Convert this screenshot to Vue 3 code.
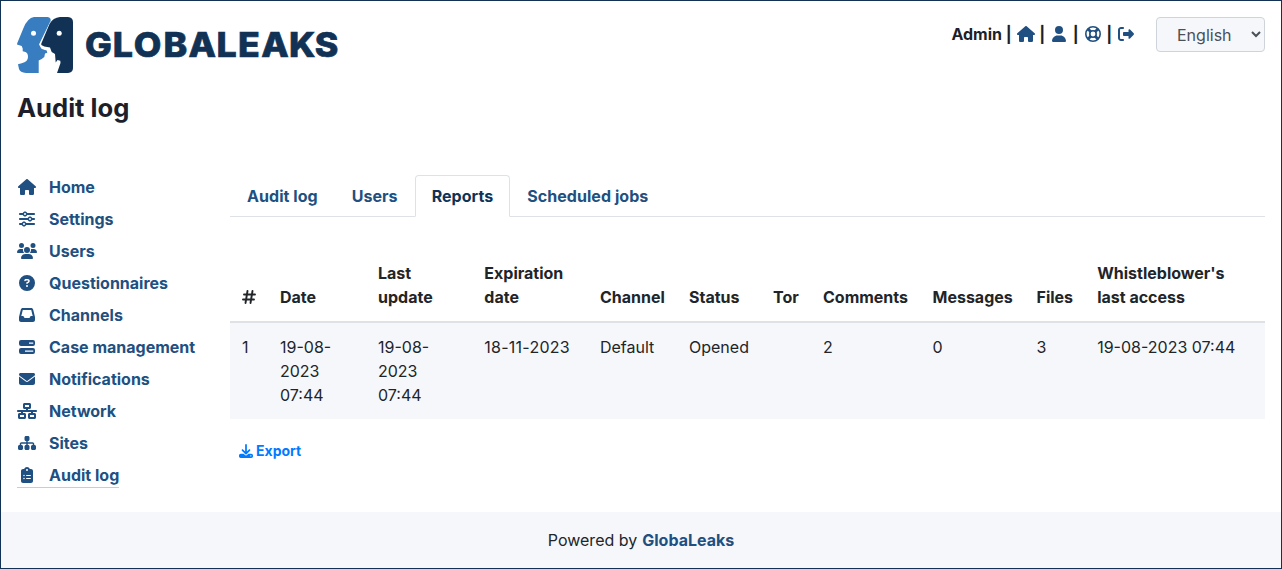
<script setup>
import { ref } from 'vue'

const language = ref('English')

const icons = {
  home: { w: 576, d: 'M575.8 255.5c0 18-15 32.1-32 32.1l-32 0 .7 160.2c0 2.7-.2 5.4-.5 8.1l0 16.2c0 22.1-17.9 40-40 40l-16 0c-1.1 0-2.2 0-3.3-.1c-1.4 .1-2.8 .1-4.2 .1L416 512l-24 0c-22.1 0-40-17.9-40-40l0-24 0-64c0-17.7-14.3-32-32-32l-64 0c-17.7 0-32 14.3-32 32l0 64 0 24c0 22.1-17.9 40-40 40l-24 0-31.9 0c-1.5 0-3-.1-4.5-.2c-1.2 .1-2.4 .2-3.6 .2l-16 0c-22.1 0-40-17.9-40-40l0-112c0-.9 0-1.9 .1-2.8l0-69.6-32 0c-18 0-32-14-32-32.1c0-9 3-17 10-24L266.4 8c7-7 15-8 22-8s15 2 21 7L564.8 231.5c8 7 12 15 11 24z' },
  sliders: { w: 512, d: 'M0 416c0 17.7 14.3 32 32 32l54.7 0c12.3 28.3 40.5 48 73.3 48s61-19.7 73.3-48L480 448c17.7 0 32-14.3 32-32s-14.3-32-32-32l-246.7 0c-12.3-28.3-40.5-48-73.3-48s-61 19.7-73.3 48L32 384c-17.7 0-32 14.3-32 32zm128 0a32 32 0 1 1 64 0 32 32 0 1 1 -64 0zM320 256a32 32 0 1 1 64 0 32 32 0 1 1 -64 0zm32-80c-32.8 0-61 19.7-73.3 48L32 224c-17.7 0-32 14.3-32 32s14.3 32 32 32l246.7 0c12.3 28.3 40.5 48 73.3 48s61-19.7 73.3-48l54.7 0c17.7 0 32-14.3 32-32s-14.3-32-32-32l-54.7 0c-12.3-28.3-40.5-48-73.3-48zM192 128a32 32 0 1 1 0-64 32 32 0 1 1 0 64zm73.3-64C253 35.7 224.8 16 192 16s-61 19.7-73.3 48L32 64C14.3 64 0 78.3 0 96s14.3 32 32 32l86.7 0c12.3 28.3 40.5 48 73.3 48s61-19.7 73.3-48L480 128c17.7 0 32-14.3 32-32s-14.3-32-32-32L265.3 64z' },
  users: { w: 640, d: 'M144 0a80 80 0 1 1 0 160A80 80 0 1 1 144 0zM512 0a80 80 0 1 1 0 160A80 80 0 1 1 512 0zM0 298.7C0 239.8 47.8 192 106.7 192l42.7 0c15.9 0 31 3.5 44.6 9.7c-1.3 7.2-1.9 14.7-1.9 22.3c0 38.2 16.8 72.5 43.3 96c-.2 0-.4 0-.7 0L21.3 320C9.6 320 0 310.4 0 298.7zM405.3 320c-.2 0-.4 0-.7 0c26.6-23.5 43.3-57.8 43.3-96c0-7.600-.7-15-1.900-22.300c13.600-6.300 28.700-9.700 44.600-9.700l42.700 0C592.200 192 640 239.800 640 298.700c0 11.800-9.600 21.300-21.300 21.300l-213.300 0zM224 224a96 96 0 1 1 192 0 96 96 0 1 1 -192 0zM128 485.300C128 411.700 187.700 352 261.300 352l117.300 0C452.300 352 512 411.700 512 485.300c0 14.700-11.900 26.700-26.700 26.700l-330.700 0c-14.700 0-26.700-11.900-26.700-26.700z' },
  question: { w: 512, d: 'M256 512A256 256 0 1 0 256 0a256 256 0 1 0 0 512zM169.800 165.300c7.900-22.300 29.100-37.300 52.800-37.300l58.300 0c34.900 0 63.100 28.300 63.100 63.100c0 22.600-12.100 43.500-31.700 54.800L280 264.400c-.2 13-10.900 23.600-24 23.600c-13.300 0-24-10.700-24-24l0-13.500c0-8.600 4.600-16.500 12.100-20.800l44.300-25.400c4.700-2.700 7.600-7.700 7.600-13.100c0-8.400-6.800-15.100-15.100-15.100l-58.300 0c-3.400 0-6.400 2.100-7.500 5.300l-.4 1.200c-4.400 12.500-18.200 19-30.600 14.600s-19-18.200-14.600-30.600l.4-1.200zM224 352a32 32 0 1 1 64 0 32 32 0 1 1 -64 0z' },
  inbox: { w: 512, d: 'M121 32C91.600 32 66 52 58.900 80.500L1.900 308.400C.6 313.500 0 318.700 0 323.900L0 416c0 35.300 28.700 64 64 64l384 0c35.300 0 64-28.700 64-64l0-92.100c0-5.200-.6-10.400-1.900-15.500l-57-227.900C446 52 420.400 32 391 32L121 32zm0 64l270 0 48 192-51.200 0c-12.100 0-23.200 6.800-28.600 17.700l-14.300 28.600c-5.400 10.800-16.500 17.700-28.600 17.700l-120.400 0c-12.100 0-23.200-6.800-28.600-17.700l-14.300-28.600c-5.400-10.800-16.500-17.700-28.600-17.700L73 288 121 96z' },
  bars: { w: 512, d: 'M64 32h384a64 64 0 0 1 64 64v64a64 64 0 0 1-64 64H64a64 64 0 0 1-64-64V96a64 64 0 0 1 64-64zM320 108v40h136v-40zM64 288h384a64 64 0 0 1 64 64v64a64 64 0 0 1-64 64H64a64 64 0 0 1-64-64v-64a64 64 0 0 1 64-64zM192 364v40h264v-40z' },
  envelope: { w: 512, d: 'M48 64C21.500 64 0 85.500 0 112c0 15.100 7.100 29.300 19.200 38.400L236.800 313.600c11.400 8.500 27 8.500 38.400 0L492.800 150.400c12.100-9.100 19.200-23.300 19.200-38.400c0-26.500-21.500-48-48-48L48 64zM0 176L0 384c0 35.300 28.700 64 64 64l384 0c35.300 0 64-28.700 64-64l0-208L294.400 339.200c-22.800 17.100-54 17.100-76.800 0L0 176z' },
  network: { w: 640, d: 'M256 64l128 0 0 64-128 0 0-64zM240 0c-26.500 0-48 21.500-48 48l0 96c0 26.500 21.500 48 48 48l48 0 0 32L32 224c-17.700 0-32 14.300-32 32s14.300 32 32 32l96 0 0 32-48 0c-26.500 0-48 21.500-48 48l0 96c0 26.500 21.500 48 48 48l160 0c26.500 0 48-21.500 48-48l0-96c0-26.500-21.500-48-48-48l-48 0 0-32 256 0 0 32-48 0c-26.500 0-48 21.500-48 48l0 96c0 26.500 21.500 48 48 48l160 0c26.500 0 48-21.500 48-48l0-96c0-26.500-21.500-48-48-48l-48 0 0-32 96 0c17.700 0 32-14.300 32-32s-14.300-32-32-32l-256 0 0-32 48 0c26.500 0 48-21.500 48-48l0-96c0-26.500-21.500-48-48-48L240 0zM96 448l0-64 128 0 0 64L96 448zm320-64l128 0 0 64-128 0 0-64z' },
  sitemap: { w: 576, d: 'M208 80c0-26.500 21.500-48 48-48l64 0c26.500 0 48 21.500 48 48l0 64c0 26.500-21.500 48-48 48l-8 0 0 40 152 0c30.900 0 56 25.100 56 56l0 32 8 0c26.500 0 48 21.500 48 48l0 64c0 26.500-21.500 48-48 48l-64 0c-26.500 0-48-21.500-48-48l0-64c0-26.500 21.500-48 48-48l8 0 0-32c0-4.400-3.600-8-8-8l-152 0 0 40 8 0c26.500 0 48 21.500 48 48l0 64c0 26.500-21.500 48-48 48l-64 0c-26.500 0-48-21.500-48-48l0-64c0-26.500 21.500-48 48-48l8 0 0-40-152 0c-4.400 0-8 3.600-8 8l0 32 8 0c26.500 0 48 21.500 48 48l0 64c0 26.500-21.500 48-48 48l-64 0c-26.500 0-48-21.500-48-48l0-64c0-26.500 21.500-48 48-48l8 0 0-32c0-30.900 25.100-56 56-56l152 0 0-40-8 0c-26.500 0-48-21.500-48-48l0-64z' },
  clipboard: { w: 384, d: 'M192 0c-41.800 0-77.400 26.700-90.500 64L64 64C28.700 64 0 92.700 0 128L0 448c0 35.300 28.700 64 64 64l256 0c35.300 0 64-28.700 64-64l0-320c0-35.300-28.700-64-64-64l-37.500 0C269.400 26.700 233.800 0 192 0zm0 64a32 32 0 1 1 0 64 32 32 0 1 1 0-64zM72 272a24 24 0 1 1 48 0 24 24 0 1 1 -48 0zm104-16l128 0c8.800 0 16 7.200 16 16s-7.200 16-16 16l-128 0c-8.800 0-16-7.200-16-16s7.200-16 16-16zM72 368a24 24 0 1 1 48 0 24 24 0 1 1 -48 0zm88 0c0-8.800 7.200-16 16-16l128 0c8.800 0 16 7.200 16 16s-7.200 16-16 16l-128 0c-8.800 0-16-7.200-16-16z' },
  user: { w: 448, d: 'M224 256A128 128 0 1 0 224 0a128 128 0 1 0 0 256zm-45.700 48C79.800 304 0 383.800 0 482.300C0 498.700 13.300 512 29.700 512l388.600 0c16.400 0 29.700-13.300 29.700-29.700C448 383.800 368.200 304 269.700 304l-91.400 0z' },
  exit: { w: 512, d: 'M160 32c17.700 0 32 14.300 32 32s-14.300 32-32 32H96c-17.700 0-32 14.300-32 32v256c0 17.700 14.300 32 32 32h64c17.700 0 32 14.300 32 32s-14.300 32-32 32H96c-53 0-96-43-96-96V128C0 75 43 32 96 32zM502.600 233.400L377 107c-15-15-41-4-41 17v68H192c-17.700 0-32 14.300-32 32v64c0 17.700 14.300 32 32 32h144v68c0 21 26 32 41 17l125.600-126.400c12.500-12.500 12.500-32.700 0-45.200z' },
  download: { w: 512, d: 'M288 32c0-17.700-14.300-32-32-32s-32 14.300-32 32l0 242.700-73.400-73.400c-12.500-12.500-32.800-12.500-45.300 0s-12.500 32.800 0 45.300l128 128c12.500 12.500 32.800 12.500 45.300 0l128-128c12.500-12.500 12.500-32.800 0-45.300s-32.800-12.500-45.300 0L288 274.700 288 32zM64 352c-35.300 0-64 28.700-64 64l0 32c0 35.300 28.700 64 64 64l384 0c35.300 0 64-28.700 64-64l0-32c0-35.300-28.700-64-64-64l-101.500 0-45.300 45.300c-25 25-65.500 25-90.500 0L165.500 352 64 352zm368 56a24 24 0 1 1 0 48 24 24 0 1 1 0-48z' }
}

const menu = [
  ['home', 'Home'], ['sliders', 'Settings'], ['users', 'Users'],
  ['question', 'Questionnaires'], ['inbox', 'Channels'], ['bars', 'Case management'],
  ['envelope', 'Notifications'], ['network', 'Network'], ['sitemap', 'Sites'],
  ['clipboard', 'Audit log']
]

const tabs = ['Audit log', 'Users', 'Reports', 'Scheduled jobs']

const columns = [
  ['#', 38], ['Date', 98], ['Last\nupdate', 106.3], ['Expiration\ndate', 115.7],
  ['Channel', 89], ['Status', 84], ['Tor', 50], ['Comments', 109.5],
  ['Messages', 104], ['Files', 60.7], ["Whistleblower's\nlast access", 179.8]
]

const rows = [
  ['1', '19-08-\n2023\n07:44', '19-08-\n2023\n07:44', '18-11-2023', 'Default', 'Opened', '', '2', '0', '3', '19-08-2023 07:44']
]
</script>

<template>
  <div class="page">
    <header>
      <svg class="logo" width="322" height="58" viewBox="0 0 322 58">
        <path fill="#377dbf" d="M17 0H30.500Q34.500 .5 33.500 4.500L23.500 26.500V30L25 32L29.700 33.500L30.300 35.700L28 36.500L27.300 40L24.700 42L21.700 43.500V56H9Q3 55.500 2 52L1 47.300L4.700 46.200Q11 45 11 40Q11 36 8.500 35L5.700 34.300V31.500L4.700 29L0 27.500L.3 26L6.500 11Q10.500 1 17 0Z" />
        <path fill="#fff" d="M33.500 4L22 27.500L24.500 31.500L30 33L32 37L36 40L37 56H45V40L40 30L28 24Z" />
        <path fill="#113255" d="M43 0H51Q56 .5 56 5V51Q56 55.500 51 56H40L43.500 46L43.300 43.700L40.500 43L38.700 45.500L38 37L34.700 35L33 30.500L27.300 29.500L24.300 28V26.500L32.500 7Q36 .5 43 0Z" />
        <circle cx="16.500" cy="16.300" r="2.500" fill="#fff" />
        <circle cx="42.200" cy="16.300" r="2.500" fill="#fff" />
        <text transform="scale(1.05 1)" x="64.700 91.300 111.300 139.600 163.300 190.100 210.400 232.600 259 283.600" y="39.800" class="wordmark">GLOBALEAKS</text>
      </svg>
      <div class="account">
        <div class="links">
          <span>Admin</span>
          <i class="bar">|</i>
          <svg class="icon" width="20" height="16" viewBox="-32 0 640 512"><path :d="icons.home.d" /></svg>
          <i class="bar">|</i>
          <svg class="icon" width="20" height="16" viewBox="-96 0 640 512"><path :d="icons.user.d" /></svg>
          <i class="bar">|</i>
          <svg class="icon" width="20" height="16" viewBox="-2 0 20 16">
            <g fill="none" stroke="#205081">
              <circle cx="8" cy="8" r="7.200" stroke-width="1.600" />
              <circle cx="8" cy="8" r="3.200" stroke-width="1.600" />
              <path stroke-width="2.800" d="M3 3l2.800 2.800M13 3l-2.800 2.800M3 13l2.800-2.800M13 13l-2.800-2.800" />
            </g>
          </svg>
          <i class="bar">|</i>
          <svg class="icon" width="20" height="16" viewBox="-64 0 640 512"><path :d="icons.exit.d" /></svg>
        </div>
        <select v-model="language"><option>English</option></select>
      </div>
    </header>

    <h1>Audit log</h1>

    <main>
      <nav>
        <a v-for="([icon, label], i) in menu" :key="label" :class="{ current: i === 9 }">
          <span class="slot">
            <svg class="icon" :width="icons[icon].w / 32" height="16" :viewBox="`0 0 ${icons[icon].w} 512`">
              <path fill-rule="evenodd" :d="icons[icon].d" />
            </svg>
          </span>{{ label }}
        </a>
      </nav>

      <section>
        <div class="tabs">
          <a v-for="tab in tabs" :key="tab" :class="{ active: tab === 'Reports' }">{{ tab }}</a>
        </div>
        <table>
          <colgroup><col v-for="[name, width] in columns" :key="name" :style="{ width: width + 'px' }" /></colgroup>
          <thead>
            <tr>
              <th v-for="[name] in columns" :key="name">
                <svg v-if="name === '#'" class="hash" width="14" height="16" viewBox="0 0 14 16">
                  <path d="M5.500 2L3.500 14M10.500 2L8.500 14M2 5.500H13M1 10.500H12" />
                </svg>
                <template v-else>{{ name }}</template>
              </th>
            </tr>
          </thead>
          <tbody>
            <tr v-for="row in rows" :key="row[0]"><td v-for="(cell, i) in row" :key="i" :class="{ expiry: i === 3 }">{{ cell }}</td></tr>
          </tbody>
        </table>
        <a class="export">
          <svg width="14" height="14" viewBox="0 0 512 512"><path :d="icons.download.d" /></svg>Export
        </a>
      </section>
    </main>

    <footer>Powered by <b>GlobaLeaks</b></footer>
  </div>
</template>

<style>
body { background: #fff; }
</style>

<style scoped>
* { box-sizing: border-box; }
.page {
  height: 569px;
  border: 1px solid #113255;
  display: flex;
  flex-direction: column;
  font: 400 16px/24px Inter, sans-serif;
  color: #212529;
  background: #fff;
  overflow: hidden;
}
header { display: flex; justify-content: space-between; align-items: flex-start; padding: 16px 16px 0; height: 75px; }
.logo { display: block; }
.wordmark { font: 800 34px Inter, sans-serif; fill: #113255; stroke: #113255; stroke-width: .7px; }
.account { display: flex; align-items: flex-start; font-weight: 700; color: #1d1f2a; }
.links { display: flex; align-items: center; height: 34px; }
.bar { font-style: normal; width: 13.500px; text-align: center; }
.icon { display: block; flex: none; fill: #205081; }
select {
  width: 109px;
  height: 35px;
  margin-left: 20px;
  padding: 0 0 0 16px;
  border: 1px solid #ced4da;
  border-radius: 4px;
  background: #f5f7fb;
  color: #495057;
  font: 400 16px/24px Inter, sans-serif;
}
h1 { margin: 16px 16px 0; height: 32px; font-size: 25.600px; line-height: 31px; font-weight: 700; color: #1d1f2a; }
main { flex: 1; display: flex; padding: 51px 16px 0; }
nav { width: 213px; display: flex; flex-direction: column; align-items: flex-start; gap: 7px; }
nav a { height: 25px; display: flex; align-items: center; border-bottom: 1px solid transparent; color: #205081; font-weight: 700; }
nav a.current { border-color: #c4ced8; }
.slot { width: 20px; margin-right: 12px; display: flex; justify-content: center; }
section { width: 1035px; }
.tabs { display: flex; height: 42px; border-bottom: 1px solid #dee2e6; }
.tabs a { height: 42px; padding: 8px 16px; border: 1px solid transparent; border-radius: 4px 4px 0 0; color: #205081; font-weight: 700; letter-spacing: .05px; }
.tabs a.active { color: #113255; background: #fff; border-color: #dee2e6 #dee2e6 #fff; }
table { width: 1035px; margin-top: 32px; table-layout: fixed; border-collapse: separate; border-spacing: 0; }
th, td { padding: 12px 0 12px 12px; text-align: left; white-space: pre-line; }
th { vertical-align: bottom; font-weight: 700; border-bottom: 2px solid #dee2e6; }
td { vertical-align: top; background: #f5f7fb; }
.expiry { letter-spacing: .25px; }
.hash { display: block; margin-bottom: 4px; fill: none; stroke: #212529; stroke-width: 1.900; stroke-linecap: round; }
.export { display: inline-flex; align-items: center; gap: 3px; margin: 21px 0 0 9px; height: 21px; font-size: 14px; font-weight: 700; color: #007bff; }
.export svg { fill: #007bff; }
footer { height: 56px; flex: none; display: flex; align-items: center; justify-content: center; gap: 5px; background: #f5f7fb; }
footer b { font-weight: 700; color: #205081; }
</style>
